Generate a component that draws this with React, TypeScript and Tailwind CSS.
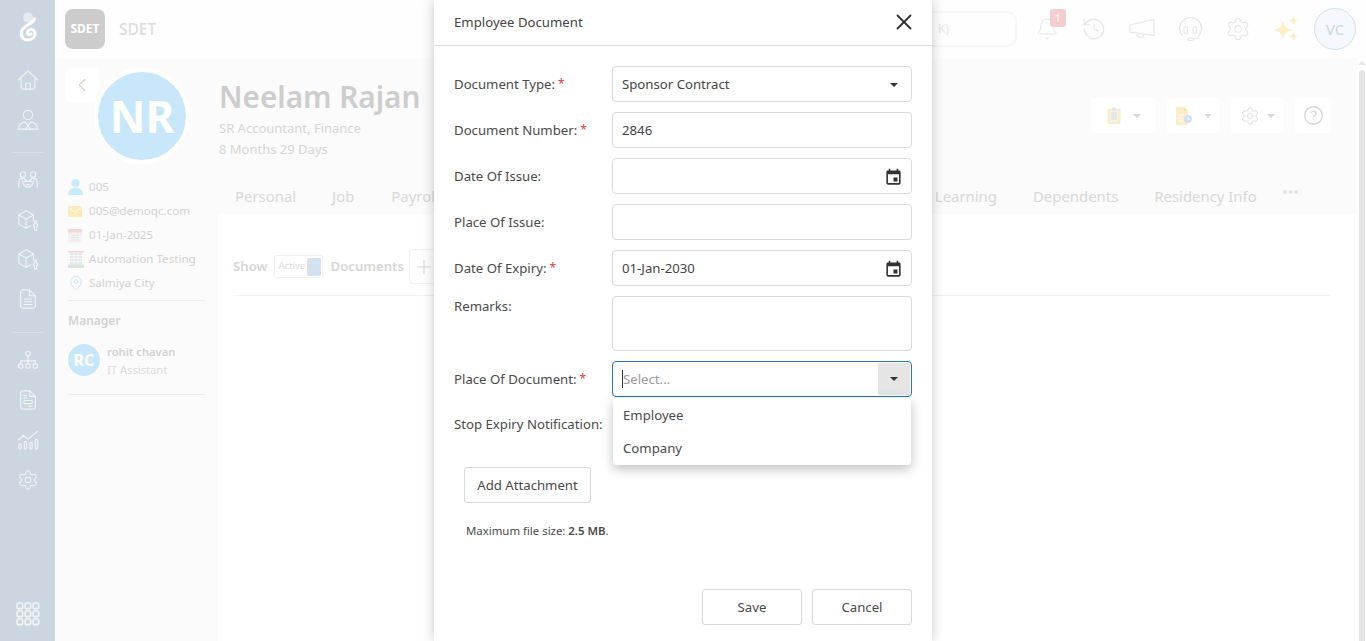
import { Bell, ChevronLeft, History, Plus, Settings, X, CircleHelp, MapPin } from 'lucide-react';

const labelFont = "font-['Noto_Sans',sans-serif]";

function Caret({ className = '' }: { className?: string }) {
  return <span className={`inline-block w-0 h-0 border-x-[4px] border-x-transparent border-t-[4px] ${className}`} />;
}

function EventIcon() {
  return (
    <svg width="19" height="19" viewBox="0 0 24 24" fill="#333">
      <path d="M17 12h-5v5h5v-5zM16 1v2H8V1H6v2H5c-1.11 0-1.99.9-1.99 2L3 19c0 1.1.89 2 2 2h14c1.1 0 2-.9 2-2V5c0-1.1-.9-2-2-2h-1V1h-2zm3 18H5V8h14v11z" />
    </svg>
  );
}

function Logo() {
  return (
    <svg width="20" height="31" viewBox="0 0 20 31" fill="none">
      <circle cx="10" cy="5.5" r="5" fill="#e4eaf1" />
      <path d="M16.5 7C15 12 6 13 3.5 19C2 25 6.5 28.5 10.5 28C15 27.5 18 24 17 20.5C16 17 11 16.5 9.5 19.5C8.5 22 11 23.5 13 22" stroke="#fff" strokeWidth="3" strokeLinecap="round" />
    </svg>
  );
}

function GridIcon() {
  return (
    <svg width="24" height="24" viewBox="0 0 24 24" fill="none" stroke="#f1f4f7" strokeWidth="1.6">
      {[1, 9, 17].map((y) =>
        [1, 9, 17].map((x) => <rect key={`${x}-${y}`} x={x} y={y} width="5.6" height="5.6" rx="1.4" />),
      )}
    </svg>
  );
}

// outline icons of the side menu, all on a 24 box
function Outline({ children, size = 22 }: { children: React.ReactNode; size?: number }) {
  return (
    <svg width={size} height={size} viewBox="0 0 24 24" fill="none" stroke="currentColor" strokeWidth="1.2" strokeLinecap="round" strokeLinejoin="round">
      {children}
    </svg>
  );
}

function HomeIcon() {
  return (
    <Outline>
      <path d="M1.5 12L12 2l10.5 10" />
      <path d="M4.5 9.5V19a3 3 0 0 0 3 3h9a3 3 0 0 0 3-3V9.5" />
      <path d="M9.5 22v-6.5h5V22" />
    </Outline>
  );
}

function SuitIcon() {
  return (
    <Outline>
      <circle cx="12" cy="6.5" r="5" />
      <path d="M1.5 22c0-4.5 3.5-7.5 7.5-8l3 4 3-4c4 .5 7.5 3.5 7.5 8z" />
      <path d="M12 18l-2.5 4M12 18l2.5 4" />
    </Outline>
  );
}

function TeamIcon() {
  return (
    <Outline>
      <circle cx="6.5" cy="6" r="3" />
      <circle cx="17.5" cy="6" r="3" />
      <path d="M2 20v-5c0-3 2-5 4.5-5 2 0 3 2 4 3.5" />
      <path d="M22 20v-5c0-3-2-5-4.5-5-2 0-3 2-4 3.5" />
      <path d="M6 13c1 5 3 7 6 7s5-2 6-7" />
      <path d="M8 13.5h8M10 17h4" />
    </Outline>
  );
}

function BoxToolIcon() {
  return (
    <Outline>
      <path d="M10 2l8 4.5v6.5M10 21l-8-4.5v-10L10 2" />
      <path d="M2 6.5l8 4.5 8-4.5M10 11v10M10 21l5-2.8" />
      <path d="M19.5 13v3l-1.5 1v2h1v4h2.5v-4h1v-2l-1.5-1v-3" />
    </Outline>
  );
}

function DocIcon() {
  return (
    <Outline>
      <path d="M13.5 2H6a2 2 0 0 0-2 2v16a2 2 0 0 0 2 2h12a2 2 0 0 0 2-2V8.5z" />
      <path d="M13.5 2v6.5H20M8 12h8M8 15h8M8 18h8" />
    </Outline>
  );
}

function OrgIcon() {
  return (
    <Outline>
      <circle cx="12" cy="5" r="2.5" />
      <path d="M12 7.5V13M4 16v-3h16v3M12 13v3" />
      <circle cx="4" cy="18.5" r="2.5" />
      <circle cx="12" cy="18.5" r="2.5" />
      <circle cx="20" cy="18.5" r="2.5" />
    </Outline>
  );
}

function FormIcon() {
  return (
    <Outline>
      <path d="M14 2H6a2 2 0 0 0-2 2v16a2 2 0 0 0 2 2h12a2 2 0 0 0 2-2V8z" />
      <path d="M14 2v6h6M7.5 7h3M7.5 10h3" />
      <rect x="7.5" y="12.5" width="9" height="3.5" rx=".5" />
      <path d="M13 19h3.5" />
    </Outline>
  );
}

function ChartIcon() {
  return (
    <Outline>
      <path d="M1.5 12L7 7l5 4L22.5 2.5" />
      <rect x="2" y="16" width="2.5" height="6" rx="1.2" />
      <rect x="8" y="13.5" width="2.5" height="8.5" rx="1.2" />
      <rect x="14" y="14.5" width="2.5" height="7.5" rx="1.2" />
      <rect x="20" y="11" width="2.5" height="11" rx="1.2" />
    </Outline>
  );
}

function MegaphoneIcon() {
  return (
    <svg width="26" height="26" viewBox="0 0 26 26" fill="none" stroke="#e6e6e6" strokeWidth="1.2">
      <path d="M1 9L25 3.5v16L1 16z" />
      <path d="M8 17.5a3.5 3.5 0 0 0 7 1" />
    </svg>
  );
}

function HeadsetIcon() {
  return (
    <svg width="26" height="26" viewBox="0 0 26 26" fill="none" stroke="#e6e6e6" strokeWidth="1.2">
      <path d="M5 19.5a11 11 0 1 1 17 0c0 2.5-2 3.5-6 3.5" />
      <rect x="7" y="10.5" width="3.5" height="7" rx="1.7" />
      <rect x="16" y="10.5" width="3.5" height="7" rx="1.7" />
      <rect x="11" y="22" width="5" height="2.5" rx="1.2" />
    </svg>
  );
}

function SparkleIcon() {
  return (
    <svg width="26" height="26" viewBox="0 0 26 26" fill="#fdeec4">
      <path d="M10 4.5c1 5.8 3.7 8.500 9.500 9.500-5.800 1-8.500 3.700-9.500 9.500-1-5.800-3.700-8.500-9.500-9.500 5.800-1 8.500-3.700 9.500-9.500z" />
      <path d="M20.5 0c.5 2.800 1.700 4 4.500 4.500-2.800.5-4 1.700-4.500 4.500-.5-2.800-1.700-4-4.500-4.500 2.800-.5 4-1.700 4.500-4.500z" />
      <path d="M20.5 16c.5 2.800 1.700 4 4.500 4.500-2.800.5-4 1.700-4.500 4.500-.5-2.800-1.700-4-4.500-4.500 2.800-.5 4-1.700 4.500-4.500z" />
    </svg>
  );
}

function ClipboardIcon() {
  return (
    <svg width="14" height="17" viewBox="0 0 14 17">
      <rect x="0.5" y="2" width="13" height="15" rx="1" fill="#fcedc8" />
      <rect x="3" y="3.5" width="8" height="11.5" fill="#f3f3f3" />
      <rect x="5" y="0.5" width="4" height="3" fill="#e2e2e2" />
      <path d="M4 6h6M4 8h6M4 10h6M4 12h6" stroke="#dcdcdc" />
    </svg>
  );
}

function FileClockIcon() {
  return (
    <svg width="17" height="18" viewBox="0 0 17 18">
      <path d="M1 0h8l4 4v14H1z" fill="#fcedc8" />
      <path d="M9 0l4 4H9z" fill="#f8e0a8" />
      <path d="M3 8h6M3 11h5M3 14h5" stroke="#fff" />
      <circle cx="13" cy="12" r="4" fill="#cfe0f5" />
      <path d="M13 10v2.2h2" stroke="#fff" fill="none" />
    </svg>
  );
}

function SideIcon({ children, height = 'h-[40px]' }: { children: React.ReactNode; height?: string }) {
  return <div className={`${height} flex items-center justify-center text-[#f1f4f7]`}>{children}</div>;
}

function Sidebar() {
  return (
    <div className="w-[55px] shrink-0 h-full bg-[#ccd6e1] flex flex-col items-center">
      <div className="h-[60px] pt-[12px]"><Logo /></div>
      <SideIcon><HomeIcon /></SideIcon>
      <SideIcon><SuitIcon /></SideIcon>
      <div className="w-[30px] h-px bg-[#d8e0e9] mt-[12px] mb-[7px]" />
      <SideIcon><TeamIcon /></SideIcon>
      <SideIcon height="h-[39px]"><BoxToolIcon /></SideIcon>
      <SideIcon height="h-[39px]"><BoxToolIcon /></SideIcon>
      <SideIcon height="h-[42px]"><DocIcon /></SideIcon>
      <div className="w-[30px] h-px bg-[#d8e0e9] mt-[12px] mb-[7px]" />
      <SideIcon><OrgIcon /></SideIcon>
      <SideIcon><FormIcon /></SideIcon>
      <SideIcon><ChartIcon /></SideIcon>
      <SideIcon><Settings size={22} strokeWidth={1.1} /></SideIcon>
      <div className="mt-auto mb-[15px]"><GridIcon /></div>
    </div>
  );
}

function TopBar() {
  return (
    <div className="h-[58px] shrink-0 bg-[#fefefe] flex items-center pl-[10px] pr-[10px]">
      <div className="w-[40px] h-[40px] rounded-[8px] bg-[#cccccc] flex items-center justify-center text-white text-[12px] font-bold">SDET</div>
      <span className="ml-[14px] pt-[2px] text-[15.5px] font-medium text-[#dcdcdc]">SDET</span>
      <div className="ml-auto flex items-center">
        <div className="w-[100px] h-[36px] border-2 border-[#f7f7f7] rounded-[10px] flex items-center pl-[19px] text-[12px] text-[#e6e6e6]">
          <span>K)</span>
        </div>
        <div className="relative ml-[18px] w-[24px] flex justify-center">
          <Bell size={24} strokeWidth={1} className="text-[#e6e6e6]" />
          <span className="absolute left-[15px] -top-[8px] w-[16px] h-[18px] rounded-[3px] bg-[#f6cdcf] text-white text-[11px] flex items-center justify-center">1</span>
        </div>
        <History size={26} strokeWidth={1.2} className="ml-[22px] text-[#e6e6e6]" />
        <span className="ml-[22px]"><MegaphoneIcon /></span>
        <span className="ml-[22px]"><HeadsetIcon /></span>
        <Settings size={26} strokeWidth={1} className="ml-[22px] text-[#e6e6e6]" />
        <span className="ml-[22px]"><SparkleIcon /></span>
        <div className="ml-[15px] w-[42px] h-[42px] rounded-full border border-[#d5e0ee] bg-[#f5f9fe] flex items-center justify-center text-[15px] text-[#cfd9e6] font-medium">VC</div>
      </div>
    </div>
  );
}

function InfoRow({ icon, text }: { icon: React.ReactNode; text: string }) {
  return (
    <div className="h-[24px] flex items-center">
      <span className="w-[21px] flex justify-start">{icon}</span>
      <span className="text-[11.6px] text-[#d2d2d2]">{text}</span>
    </div>
  );
}

function ProfileColumn() {
  return (
    <div className="relative w-[163px] shrink-0 bg-[#fbfbfb] px-[13px] pt-[10px]">
      <button className="absolute left-[10px] top-[10px] w-[34px] h-[34px] rounded-[6px] bg-white flex items-center justify-center text-[#d9cfc8]">
        <ChevronLeft size={22} strokeWidth={1.2} />
      </button>
      <div className="ml-[26px] w-[96px] h-[96px] rounded-full bg-[#c9e7fa] border-[4px] border-white flex items-center justify-center text-white text-[44px] font-bold">NR</div>
      <div className="mt-[11px]">
        <InfoRow
          icon={
            <svg width="15" height="16" viewBox="0 0 15 16" fill="#c5ecfb">
              <circle cx="7.5" cy="4" r="4" />
              <path d="M0 16c0-5 3-7 7.5-7s7.5 2 7.5 7z" />
            </svg>
          }
          text="005"
        />
        <InfoRow
          icon={
            <svg width="14" height="11" viewBox="0 0 14 11">
              <rect width="14" height="11" rx="1" fill="#fdebb9" />
              <path d="M1 2l6 4 6-4" stroke="#fff" fill="none" />
            </svg>
          }
          text="005@demoqc.com"
        />
        <InfoRow
          icon={
            <svg width="14" height="15" viewBox="0 0 14 15">
              <rect y="1" width="14" height="14" rx="1" fill="#f3f3f3" />
              <rect y="1" width="14" height="3.5" rx="1" fill="#f8d4d4" />
              <path d="M3 7h8M3 9.5h8M3 12h8" stroke="#e2e2e2" />
            </svg>
          }
          text="01-Jan-2025"
        />
        <InfoRow
          icon={
            <svg width="16" height="17" viewBox="0 0 16 17">
              <rect width="16" height="1.5" fill="#f6d3d0" />
              <rect x="2" y="1.5" width="12" height="12" fill="#e4e8ee" />
              <path d="M2 4.5h12M2 7.5h12M2 10.5h12M6 1.5v12M10 1.5v12" stroke="#f7f7f7" />
              <rect y="13.5" width="16" height="3.5" fill="#d7e6d8" />
            </svg>
          }
          text="Automation Testing"
        />
        <InfoRow icon={<MapPin size={16} strokeWidth={1.4} className="text-[#cfe4f2]" />} text="Salmiya City" />
      </div>
      <div className="h-px bg-[#ececec] mt-[5px]" />
      <div className="mt-[11px] text-[12px] font-semibold text-[#d2d2d2]">Manager</div>
      <div className="mt-[11px] flex items-center">
        <div className="w-[32px] h-[32px] rounded-full bg-[#c9e7fa] text-white text-[16px] font-bold flex items-center justify-center">RC</div>
        <div className="ml-[7px] text-[11.2px] leading-[18px] pt-[2px]">
          <div className="font-semibold text-[#d2d2d2]">rohit chavan</div>
          <div className="text-[#dcdcdc]">IT Assistant</div>
        </div>
      </div>
      <div className="h-px bg-[#ececec] mt-[15px]" />
    </div>
  );
}

function ActionButton({ children, width, gap = 'gap-[12px]' }: { children: React.ReactNode; width: string; gap?: string }) {
  return <div className={`h-[35px] bg-white rounded-[4px] flex items-center justify-center ${gap} ${width}`}>{children}</div>;
}

function MainColumn() {
  return (
    <div className="flex-1 flex flex-col min-w-0">
      <div className="h-[156px] bg-[#fbfbfb]">
        <div className="flex pl-[1px] pr-[26px] pt-[21px]">
          <div>
            <div className="text-[29.7px] leading-[36px] font-semibold text-[#cdcdcd]">Neelam Rajan</div>
            <div className="text-[13px] leading-[21px] mt-[3px] text-[#d6d6d6]">SR Accountant, Finance</div>
            <div className="text-[13px] leading-[21px] text-[#d6d6d6]">8 Months 29 Days</div>
          </div>
          <div className="ml-auto flex gap-[11px] pt-[19px]">
            <ActionButton width="w-[65px]"><ClipboardIcon /><Caret className="border-t-[#d8d8d8]" /></ActionButton>
            <ActionButton width="w-[53px]"><FileClockIcon /><Caret className="border-t-[#d8d8d8]" /></ActionButton>
            <ActionButton width="w-[53px]" gap="gap-[7px]"><Settings size={20} strokeWidth={1} className="text-[#d6d6d6]" /><Caret className="border-t-[#d8d8d8]" /></ActionButton>
            <ActionButton width="w-[36px]"><CircleHelp size={21} strokeWidth={1.5} className="text-[#d6d6d6]" /></ActionButton>
          </div>
        </div>
        <div className="flex items-center pl-[17px] mt-[25px] text-[14.9px] text-[#d8d8d8]">
          <span>Personal</span>
          <span className="ml-[36px]">Job</span>
          <span className="ml-[37px]">Payroll</span>
          <span className="ml-[496px]">Learning</span>
          <span className="ml-[36px]">Dependents</span>
          <span className="ml-[36px]">Residency Info</span>
          <span className="ml-[26px] -mt-[6px] text-[12px] tracking-[1px] font-bold text-[#e2e2e2]">•••</span>
        </div>
      </div>
      <div className="flex-1 bg-white px-[15px] pt-[41px]">
        <div className="flex items-center h-[23px] text-[13.2px] font-semibold text-[#d6d6d6]">
          <span>Show</span>
          <div className="ml-[6px] w-[49px] h-[23px] border border-[#f2f2f2] rounded-[2px] flex items-center pl-[4px] text-[9.5px] font-normal text-[#dcdcdc]">
            Active
            <span className="ml-auto mr-[1px] w-[14px] h-[18px] rounded-[2px] bg-[#d3e1f0]" />
          </div>
          <span className="ml-[8px]">Documents</span>
          <div className="ml-[5px] w-[30px] h-[35px] border border-[#f2f2f2] rounded-[4px] flex items-center justify-center"><Plus size={22} strokeWidth={1.2} /></div>
        </div>
        <div className="h-px bg-[#f2f2f2] mt-[17px] mr-[12px]" />
      </div>
    </div>
  );
}

function Field({ label, required, children }: { label: string; required?: boolean; children: React.ReactNode }) {
  return (
    <div className="flex">
      <div className="w-[158px] shrink-0 flex items-center h-[36px] pt-[2px] text-[#4a4a4a]">
        <span>{label}</span>
        {required && <span className="ml-[3px] -mt-[3px] text-[12px] leading-none text-[#e04040]">*</span>}
      </div>
      {children}
    </div>
  );
}

function Box({ children }: { children?: React.ReactNode }) {
  return <div className="w-[300px] h-[36px] border border-[#d9d9d9] rounded-[4px] flex items-center justify-between pl-[9px] pr-[8px] pt-[2px] text-[#444]">{children}</div>;
}

function Modal() {
  return (
    <div className={`absolute left-[434px] top-0 w-[498px] h-[641px] bg-white shadow-[0_0_12px_rgba(0,0,0,0.22)] text-[13.2px] ${labelFont}`}>
      <div className="h-[46px] border-b border-[#dedede] flex items-center justify-between pl-[20px] pr-[15px] text-[#444]">
        <span>Employee Document</span>
        <X size={26} strokeWidth={1.7} className="text-[#333] -mt-[2px]" />
      </div>
      <div className="relative px-[20px] pt-[20px] flex flex-col gap-[10px]">
        <Field label="Document Type:" required>
          <Box>
            <span>Sponsor Contract</span>
            <Caret className="mr-[5px] border-t-[#333]" />
          </Box>
        </Field>
        <Field label="Document Number:" required><Box>2846</Box></Field>
        <Field label="Date Of Issue:"><Box><span /><EventIcon /></Box></Field>
        <Field label="Place Of Issue:"><Box /></Field>
        <Field label="Date Of Expiry:" required><Box><span>01-Jan-2030</span><EventIcon /></Box></Field>
        <div className="flex">
          <div className="w-[158px] text-[#4a4a4a] leading-[20px]">Remarks:</div>
          <div className="w-[300px] h-[55px] border border-[#d9d9d9] rounded-[4px]" />
        </div>
        <div className="relative">
          <Field label="Place Of Document:" required>
            <div className="w-[300px] h-[36px] border border-[#2a73b8] rounded-[4px] flex items-center pl-[9px] pr-[1px]">
              <span className="w-px h-[18px] bg-[#333]" />
              <span className="pt-[2px] text-[#9a9a9a]">Select...</span>
              <span className="ml-auto w-[32px] h-[32px] bg-[#e5e5e5] rounded-[2px] flex items-center justify-center"><Caret className="border-t-[#333]" /></span>
            </div>
          </Field>
          {/* dropdown list */}
          <div className="absolute left-[159px] top-[37px] w-[298px] h-[67px] bg-white rounded-[4px] shadow-[0_4px_12px_rgba(0,0,0,0.25)] text-[#4a4a4a] z-10 flex flex-col">
            <div className="h-[33px] flex items-center pl-[10px] pt-[2px]">Employee</div>
            <div className="h-[33px] flex items-center pl-[10px] pt-[2px]">Company</div>
          </div>
        </div>
        <div className="h-[36px] mt-[-1px] pt-[2px] flex items-center text-[#4a4a4a]">Stop Expiry Notification:</div>
        <button className="ml-[10px] mt-[15px] w-[127px] h-[36px] pt-[2px] border border-[#d9d9d9] rounded-[3px] text-[#4a4a4a]">Add Attachment</button>
        <div className="ml-[12px] mt-[9px] text-[11.4px] text-[#4a4a4a]">Maximum file size: <span className="font-semibold">2.5 MB</span>.</div>
        <div className="flex justify-end gap-[10px] mt-[40px]">
          <button className="w-[100px] h-[36px] pt-[1px] border border-[#d9d9d9] rounded-[3px] text-[#4a4a4a]">Save</button>
          <button className="w-[100px] h-[36px] pt-[1px] border border-[#d9d9d9] rounded-[3px] text-[#4a4a4a]">Cancel</button>
        </div>
      </div>
    </div>
  );
}

function ScrollBar() {
  return (
    <div className="w-[9px] shrink-0 bg-white flex flex-col items-center pt-[3px]">
      <span className="w-0 h-0 border-x-[4px] border-x-transparent border-b-[4px] border-b-[#e6e6e6]" />
      <div className="mt-[5px] w-[6px] h-[571px] rounded-t-[3px] bg-[#e4e4e4]" />
    </div>
  );
}

export default function App() {
  return (
    <div className={`relative w-[1366px] h-[641px] overflow-hidden flex bg-white ${labelFont}`}>
      <Sidebar />
      <div className="flex-1 flex flex-col min-w-0">
        <TopBar />
        <div className="flex-1 flex min-h-0">
          <ProfileColumn />
          <MainColumn />
          <ScrollBar />
        </div>
      </div>
      <Modal />
    </div>
  );
}
